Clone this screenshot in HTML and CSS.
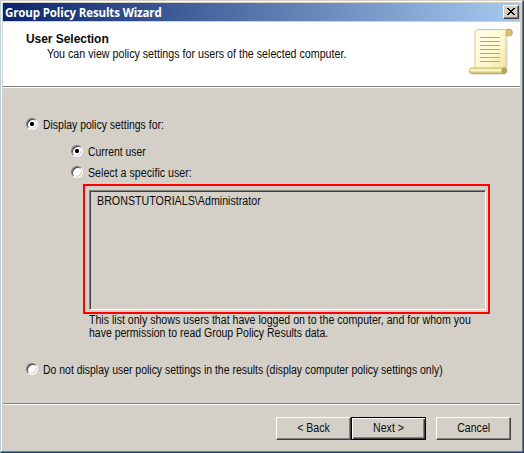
FILE: index.html
```html
<!DOCTYPE html>
<html lang="en">
<head>
<meta charset="utf-8">
<title>Group Policy Results Wizard</title>
<link rel="stylesheet" href="styles.css">
</head>
<body>
<main class="window">
  <header class="titlebar">
    <span class="caption">Group Policy Results Wizard</span>
    <button class="close" aria-label="Close">
      <svg width="8" height="7" viewBox="0 0 8 7" shape-rendering="crispEdges"><path d="M0 0h2v1h1v1h2V1h1V0h2v1H7v1H6v1H5v1h1v1h1v1h1v1H6V6H5V5H3v1H2v1H0V6h1V5h1V4h1V3H2V2H1V1H0z"/></svg>
    </button>
  </header>
  <section class="banner">
    <div class="heading">
      <h1>User Selection</h1>
      <p><span class="text t-sub">You can view policy settings for users of the selected computer.</span></p>
    </div>
    <svg class="scroll" width="46" height="48" viewBox="0 0 46 48">
      <defs>
        <linearGradient id="paper" x1="0" y1="0" x2="1" y2="1"><stop offset="0" stop-color="#fffdec"/><stop offset=".55" stop-color="#fdf8cf"/><stop offset="1" stop-color="#efe193"/></linearGradient>
        <linearGradient id="roll" x1="0" y1="0" x2="0" y2="1"><stop offset="0" stop-color="#e6d98a"/><stop offset=".4" stop-color="#fffcd8"/><stop offset="1" stop-color="#c3b052"/></linearGradient>
      </defs>
      <path d="M5 46.500H36L39 44V12" fill="none" stroke="#999" stroke-opacity=".3" stroke-width="1.200"/>
      <path d="M10 1.500H40V7H38V40Q39 45 36 45H7V5Q7 1.500 10 1.500z" fill="url(#paper)" stroke="#d6c985"/>
      <path d="M38 8V3.500Q38 1 41 1Q44.500 1 44.500 4.500Q44.500 8 41 8z" fill="#d9cb73" stroke="#b9a959" stroke-width=".8"/>
      <circle cx="41.500" cy="4" r="1.500" fill="#f8f0b0" stroke="#99883c" stroke-width=".7"/>
      <path d="M3 40H35Q33 43 35 45.500H3Q1.500 45.500 1.500 43T3 40z" fill="url(#roll)" stroke="#c2b362" stroke-width=".9"/>
      <path d="M35 40Q38.500 39 38.500 42.500T35 45.500Q33 43 35 40z" fill="#bba94f" stroke="#a39243" stroke-width=".7"/>
      <path d="M12 9.500H32M12 13.500H32M12 17.500H32M12 21.500H32M12 25.500H32M12 29.500H32M12 33.500H32" stroke="#aaa4a1"/>
    </svg>
  </section>
  <section class="page">
    <label class="option"><i class="radio on"></i><span class="text t-disp">Display policy settings for:</span></label>
    <div class="sub">
      <label class="option"><i class="radio on"></i><span class="text t-cur">Current user</span></label>
      <label class="option"><i class="radio"></i><span class="text t-sel">Select a specific user:</span></label>
      <div class="highlight"><div class="list"><span class="text t-adm">BRONSTUTORIALS\Administrator</span></div></div>
      <p class="note"><span class="text t-n1">This list only shows users that have logged on to the computer, and for whom you</span><br><span class="text t-n2">have permission to read Group Policy Results data.</span></p>
    </div>
    <label class="option last"><i class="radio"></i><span class="text t-not">Do not display user policy settings in the results (display computer policy settings only)</span></label>
  </section>
  <footer class="actions">
    <button class="btn"><span class="text">&lt; Back</span></button>
    <button class="btn default"><span class="text">Next &gt;</span></button>
    <button class="btn cancel"><span class="text">Cancel</span></button>
  </footer>
</main>
</body>
</html>
```

FILE: styles.css
```css
* { box-sizing: border-box; }
body { margin: 0; background: #b7cde3; font: 12px/13px "Liberation Sans", Arial, sans-serif; color: #0a0a0a; white-space: nowrap; }
h1, p { margin: 0; }
.window { width: 524px; height: 453px; display: flex; flex-direction: column; background: #d4d0c8; padding: 1px;
  border-style: solid; border-width: 1px; border-color: #d4d0c8 #28476e #28476e #b7cde3;
  box-shadow: inset -1px -1px #77777a, inset 1px 1px #fff; }
.titlebar { height: 19px; flex: none; margin: 1px 2px 0 1px; padding: 0 1px 0 2px; display: flex; align-items: center; justify-content: space-between; background: linear-gradient(90deg, #0a246a, #a6caf0); border-bottom: 1px solid #d4d0c8; }
.caption { color: #fff; font: bold 11.5px/17px "Open Sans", "Noto Sans", sans-serif; letter-spacing: -.12px; }
button { font: inherit; color: inherit; background: #d4d0c8; border: 1px solid; border-color: #fff #404040 #404040 #fff; box-shadow: inset -1px -1px #808080; padding: 0; border-radius: 0; }
.close { width: 16px; height: 14px; display: flex; align-items: center; justify-content: center; padding: 0 1px 1px 0; }
.banner { height: 65px; flex: none; margin: 0 2px 0 1px; padding: 6px 6px 0 23px; display: flex; justify-content: space-between; background: #fff; border-bottom: 1px solid #808080; box-shadow: 0 1px #fff; }
.heading { padding-top: 4px; }
h1 { font-size: 12px; line-height: 14px; letter-spacing: -.05px; }
.heading p { margin: 2px 0 0 21px; }
.page { height: 316px; flex: none; padding: 30px 0 0 24px; }
.option { display: flex; align-items: center; height: 13px; gap: 5px; }
.option .text { padding-top: 4px; }
.radio { width: 12px; height: 12px; flex: none; border-radius: 50%; background: #fff; border: 1px solid; border-color: #777 #fff #fff #777; box-shadow: inset 1px 1px #444, inset -1px -1px #d4d0c8; }
.radio.on { background: radial-gradient(circle, #000 1.800px, #fff 2.500px); }
.sub { padding: 14px 0 0 45px; }
.sub .option + .option { margin-top: 8px; }
.highlight { width: 407px; height: 130px; margin: 6px 0 0 12px; padding: 4px 3px 2px 4px; border: 2px solid #f00; }
.list { width: 397px; height: 120px; padding: 4px 6px; border: 1px solid; border-color: #808080 #fff #fff #808080; box-shadow: inset 1px 1px #404040; }
.note { margin: 0 0 0 18px; }
.last { margin-top: 22px; }
.actions { flex: 1; display: flex; justify-content: flex-end; margin: 0 2px 0 1px; padding: 13px 9px 0 0; border-top: 1px solid #808080; box-shadow: inset 0 1px #fff; }
.btn { width: 75px; height: 23px; }
.default { border-color: #000; box-shadow: inset 1px 1px #fff, inset -1px -1px #404040, inset -2px -2px #808080; }
.cancel { margin-left: 10px; }
/* condensed dialog face */
.text { display: inline-block; transform: scaleX(.88); transform-origin: 0 50%; }
.btn .text { transform-origin: 50% 50%; }
.t-sub { transform: scaleX(.89); }
.t-disp { transform: scaleX(.871); }
.t-cur { transform: scaleX(.866); }
.t-sel { transform: scaleX(.889); }
.t-adm { transform: scaleX(.891); margin-left: 1px; }
.t-n1 { transform: scaleX(.882); }
.t-n2 { transform: scaleX(.875); }
.t-not { transform: scaleX(.871); }
```
